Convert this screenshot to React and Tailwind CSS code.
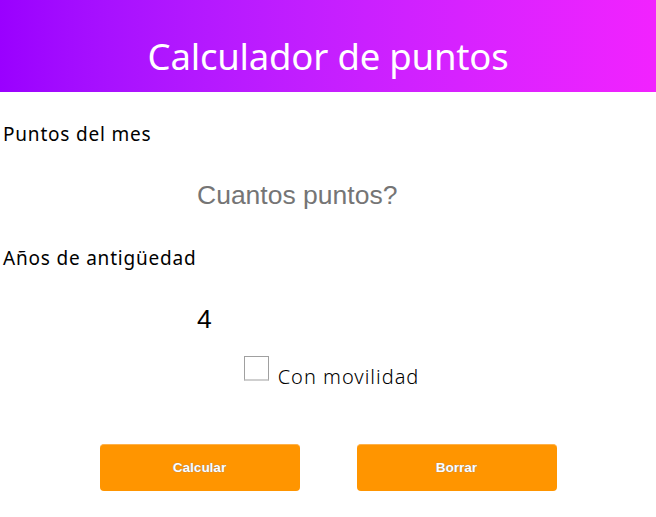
import React, { useState } from 'react';

const App = () => {
  const [puntos, setPuntos] = useState('');
  const [anios, setAnios] = useState('4');
  const [movilidad, setMovilidad] = useState(false);

  return (
    <div className="min-h-screen bg-white text-black">
      <header className="h-[92px] bg-gradient-to-r from-[#9a00ff] to-[#f222ff] flex items-end justify-center pb-[18px]">
        <h1 className="text-white text-[36.5px] leading-none font-['Noto_Sans',sans-serif] tracking-[-0.2px]">
          Calculador de puntos
        </h1>
      </header>

      <div className="pt-[30px]">
        <label className="block pl-[3px] text-[19px] leading-[24px] tracking-[0.8px] font-['Noto_Sans',sans-serif]">Puntos del mes</label>
        <input
          type="text"
          value={puntos}
          onChange={(e) => setPuntos(e.target.value)}
          placeholder="Cuantos puntos?"
          className="block w-[262px] mx-auto mt-[34px] text-[26.5px] leading-[30px] font-['Liberation_Sans',Arial,sans-serif] placeholder:text-[#757575] outline-none"
        />

        <label className="block pl-[3px] mt-[36px] text-[19px] leading-[24px] tracking-[0.8px] font-['Noto_Sans',sans-serif]">Años de antigüedad</label>
        <input
          type="text"
          value={anios}
          onChange={(e) => setAnios(e.target.value)}
          className="block w-[262px] mx-auto mt-[34px] text-[26.5px] leading-[30px] font-['Liberation_Sans',Arial,sans-serif] outline-none"
        />

        <div className="flex items-start justify-center gap-[9px] mt-[22px] pl-[7px]">
          <button
            type="button"
            onClick={() => setMovilidad(!movilidad)}
            className="w-[25px] h-[25px] border border-[#a0a0a0] border-b-[#cfcfcf] border-b-2 bg-white flex items-center justify-center text-[16px]"
          >
            {movilidad ? '✓' : ''}
          </button>
          <span className="text-[20px] leading-[24px] tracking-[1px] font-light font-['Noto_Sans',sans-serif] mt-[9px]">Con movilidad</span>
        </div>

        <div className="flex justify-center gap-[57px] mt-[55px]">
          <button className="w-[200px] h-[47px] rounded-[4px] bg-[#ff9500] border-t border-t-[#ffb24a] text-white text-[13.5px] font-bold font-['Liberation_Sans',Arial,sans-serif] [text-shadow:0_0_1px_#6a7aa0]">
            Calcular
          </button>
          <button
            onClick={() => { setPuntos(''); setAnios(''); setMovilidad(false); }}
            className="w-[200px] h-[47px] rounded-[4px] bg-[#ff9500] border-t border-t-[#ffb24a] text-white text-[13.5px] font-bold font-['Liberation_Sans',Arial,sans-serif] [text-shadow:0_0_1px_#6a7aa0]"
          >
            Borrar
          </button>
        </div>
      </div>
    </div>
  );
};

export default App;
